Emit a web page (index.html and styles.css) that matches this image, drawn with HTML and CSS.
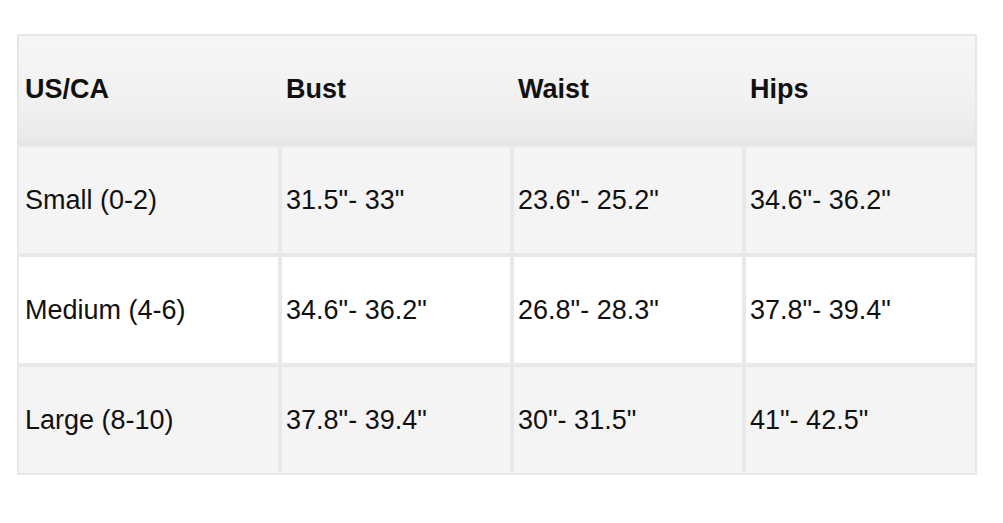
FILE: index.html
```html
<!DOCTYPE html>
<html>
<head>
<meta charset="utf-8">
<link rel="stylesheet" href="styles.css">
</head>
<body>
<table class="size-table">
  <colgroup>
    <col class="c1"><col class="c2"><col class="c3"><col class="c4">
  </colgroup>
  <thead>
    <tr>
      <th>US/CA</th>
      <th>Bust</th>
      <th>Waist</th>
      <th>Hips</th>
    </tr>
  </thead>
  <tbody>
    <tr class="shade">
      <td>Small (0-2)</td>
      <td>31.5"- 33"</td>
      <td>23.6"- 25.2"</td>
      <td>34.6"- 36.2"</td>
    </tr>
    <tr>
      <td>Medium (4-6)</td>
      <td>34.6"- 36.2"</td>
      <td>26.8"- 28.3"</td>
      <td>37.8"- 39.4"</td>
    </tr>
    <tr class="shade">
      <td>Large (8-10)</td>
      <td>37.8"- 39.4"</td>
      <td>30"- 31.5"</td>
      <td>41"- 42.5"</td>
    </tr>
  </tbody>
</table>
</body>
</html>
```

FILE: styles.css
```css
html, body {
  margin: 0;
  padding: 0;
  background: #ffffff;
}
body {
  padding: 34px 0 0 17px;
  font-family: "Liberation Sans", Arial, sans-serif;
  color: #111111;
}
.size-table {
  border-collapse: separate;
  border-spacing: 0;
  width: 960px;
  table-layout: fixed;
  font-size: 27px;
}
.c1 { width: 263px; }
.c2 { width: 232px; }
.c3 { width: 232px; }
.c4 { width: 233px; }
.size-table th {
  height: 107px;
  padding: 0 6px;
  text-align: left;
  font-weight: bold;
  background: linear-gradient(to bottom, #f6f6f6 0%, #f1f1f1 60%, #e9e9e9 100%);
  border-top: 2px solid #e6e6e6;
  border-bottom: 2px solid #e4e4e4;
  vertical-align: middle;
}
.size-table th:first-child { border-left: 2px solid #e6e6e6; }
.size-table th:last-child { border-right: 2px solid #e6e6e6; }
.size-table td {
  height: 106px;
  padding: 0 4px 0 4px;
  border: 2px solid #e8e8e8;
  background: #ffffff;
  vertical-align: middle;
  white-space: nowrap;
}
.size-table td:first-child { padding-left: 6px; }
.size-table tr.shade td {
  background: #f4f4f4;
}
```
